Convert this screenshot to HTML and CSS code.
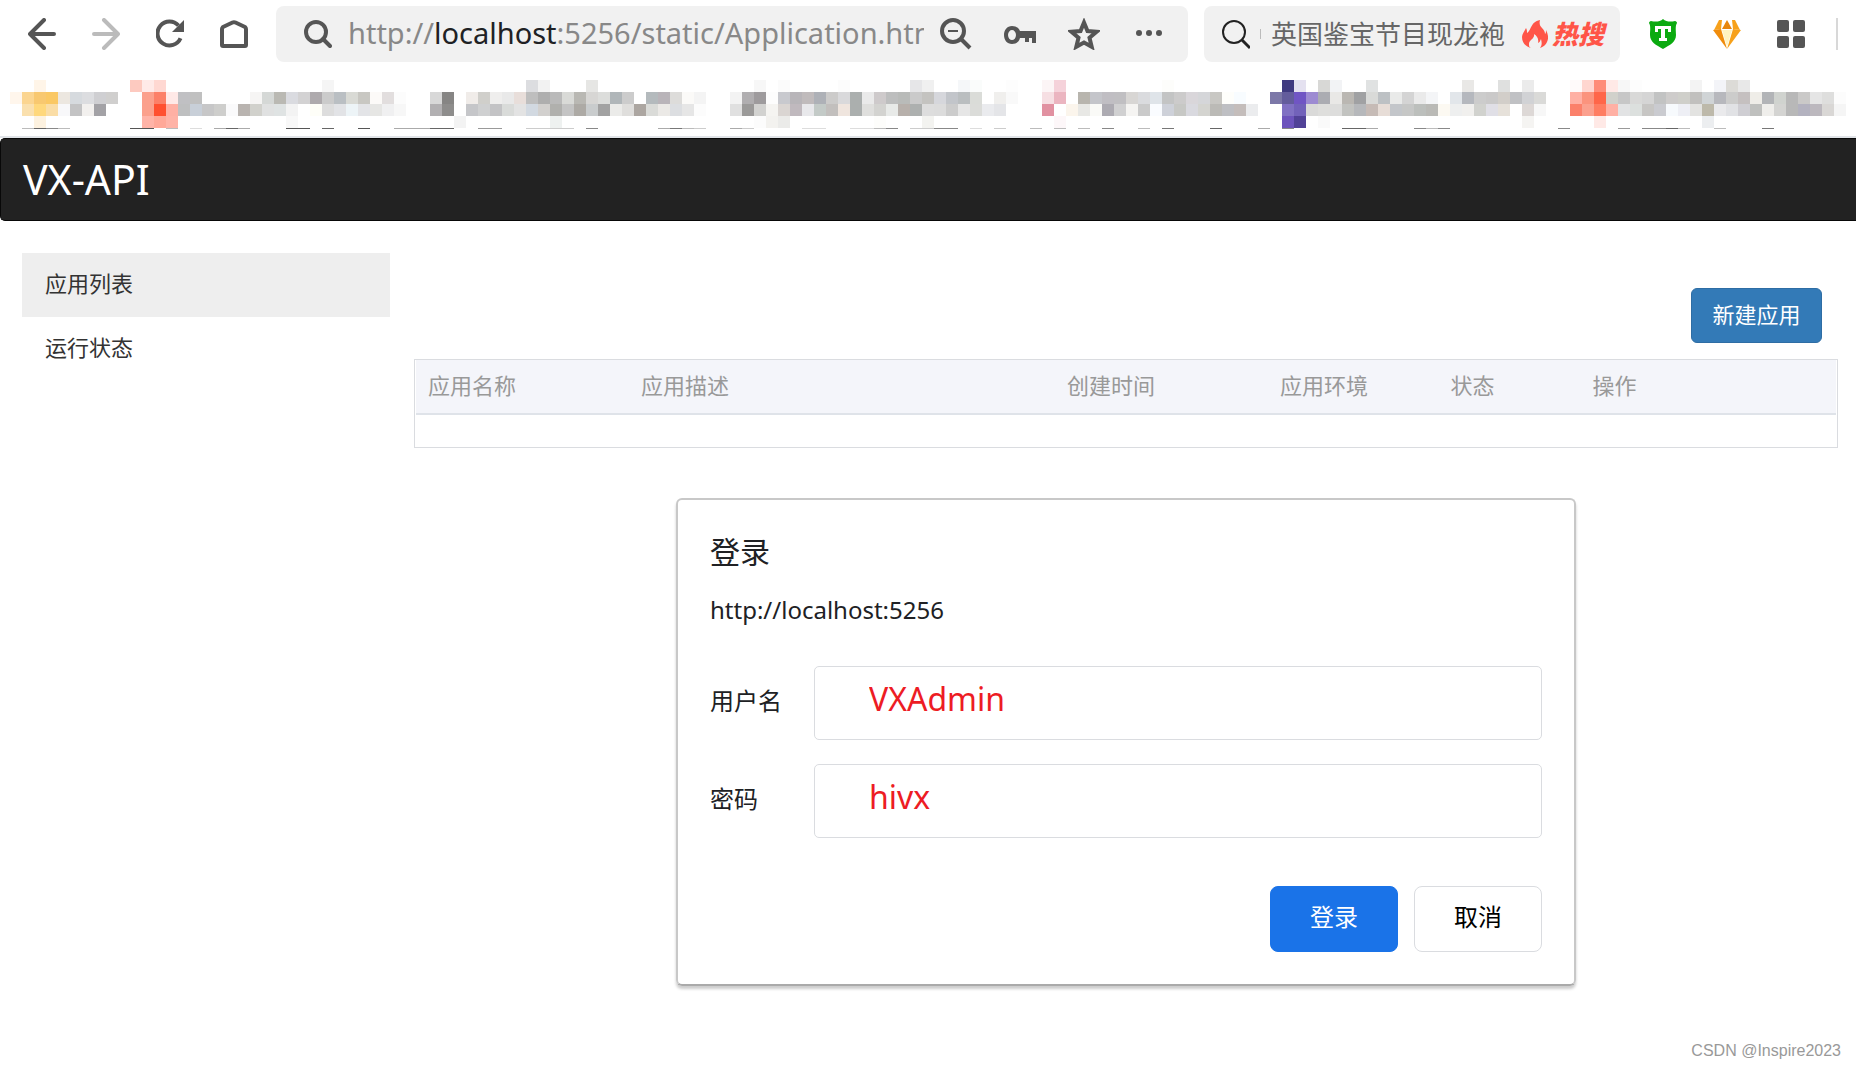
FILE: index.html
```html
<!DOCTYPE html>
<html lang="zh-CN">
<head>
<meta charset="utf-8">
<title>VX-API</title>
<link rel="stylesheet" href="styles.css">
</head>
<body>
<header class="browser">
  <div class="toolbar">
    <div class="nav-buttons">
      <button class="icon-btn" aria-label="后退"><svg viewBox="0 0 28 32" width="28" height="32"><path d="M16 2 2 16l14 14M2 16h24" class="stroke"/></svg></button>
      <button class="icon-btn muted" aria-label="前进"><svg viewBox="0 0 28 32" width="28" height="32"><path d="M12 2l14 14-14 14M26 16H2" class="stroke"/></svg></button>
      <button class="icon-btn" aria-label="刷新"><svg viewBox="0 0 28 32" width="28" height="32"><path d="M24.500 20.300A12 12 0 1 1 22.500 7.500" fill="none" stroke="currentColor" stroke-width="4"/><path d="M28 2v12H16z" fill="currentColor"/></svg></button>
      <button class="icon-btn" aria-label="主页"><svg viewBox="0 0 28 32" width="28" height="32"><path d="M2 11v16q0 1 1 1h22q1 0 1-1V11q0-1-1-2L15.500 4.500q-1.500-.7-3 0L3 9q-1 1-1 2z" class="stroke"/></svg></button>
    </div>
    <div class="address">
      <svg viewBox="0 0 28 32" width="28" height="32"><circle cx="12" cy="14" r="10" class="stroke"/><path d="m19 21 7 7" class="stroke"/></svg>
      <div class="url" role="textbox" aria-label="地址栏" contenteditable="true" spellcheck="false">http://<span class="host">localhost</span>:5256/static/Application.html</div>
      <div class="address-actions">
        <button class="icon-btn" aria-label="缩小"><svg viewBox="0 0 32 32" width="32" height="32"><circle cx="13" cy="13" r="11" fill="none" stroke="currentColor" stroke-width="4"/><path d="M8 13h10" stroke="currentColor" stroke-width="2"/><path d="m21 21 9 9" fill="none" stroke="currentColor" stroke-width="4"/></svg></button>
        <button class="icon-btn" aria-label="密码"><svg viewBox="0 0 32 32" width="32" height="32"><path fill="currentColor" fill-rule="evenodd" d="M8 8c4 0 7 2 8 5h16v12h-4v-5h-3v4h-4v-4h-5c-1 4-4 6-8 6-5 0-8-4-8-9s3-9 8-9zm0 4c-2 0-4 2-4 5s2 5 4 5 4-2 4-5-2-5-4-5z"/></svg></button>
        <button class="icon-btn" aria-label="收藏"><svg viewBox="0 0 32 32" width="32" height="32"><path d="m16 4.500 3.500 8.500 9 .8-7 6 2.200 9L16 24.500l-7.700 4.300 2.200-9-7-6 9-.8z" fill="none" stroke="currentColor" stroke-width="4"/></svg></button>
        <button class="icon-btn" aria-label="更多"><svg viewBox="0 0 32 32" width="32" height="32"><g fill="currentColor"><circle cx="7" cy="15" r="3"/><circle cx="17" cy="15" r="3"/><circle cx="27" cy="15" r="3"/></g></svg></button>
      </div>
    </div>
    <div class="search">
      <svg class="dark" viewBox="0 0 28 32" width="28" height="32"><circle cx="12" cy="14" r="11" fill="none" stroke="currentColor" stroke-width="2"/><path d="m20 22 8 8" stroke="currentColor" stroke-width="3"/></svg>
      <span class="caret"></span>
      <input class="search-input" type="text" aria-label="搜索" value="英国鉴宝节目现龙袍">
      <a class="hot" href="#"><svg viewBox="0 0 26 28" width="26" height="28"><path fill="currentColor" d="M18 0c-1 4 0 6 2 8s3 4 3 6c1-1 1-2 1-4 2 4 3 8 1 12-1 3-4 5-7 6 2-3 2-5 1-9-1 2-1 3-3 4 1-4-1-7-4-9 1 5-5 6-5 10 0 2 0 3 2 4-5-1-9-5-9-11C0 14 2 12 4 8c1 2 1 3 1 5C10 10 8 2 18 0z"/></svg>热搜</a>
    </div>
    <div class="extensions">
      <button class="icon-btn" aria-label="安全"><svg viewBox="0 0 28 30" width="28" height="30"><path d="M14 0c3 3 8 3 12 2 1 0 2 1 2 2-2 3-1 8-1 12 0 7-6 10-13 14C7 26 1 23 1 16 1 12 2 7 0 4c0-1 1-2 2-2 4 1 9 1 12-2z" fill="#0baa10"/><path d="M6 7h16v6h-3v-3h-3v9h2v3h-8v-3h2v-9H9v3H6z" fill="#fff"/></svg></button>
      <button class="icon-btn" aria-label="会员"><svg viewBox="0 0 28 30" width="28" height="30"><path d="M6 1h3L8 10 1 11z" fill="#f7a11a"/><path d="M22 1h-3l1 9 7 1z" fill="#f7a11a"/><path d="m14 1 5 9H9z" fill="#e8860c"/><path d="m0 11 8-1 6 20z" fill="#f08c0c"/><path d="m28 11-8-1-6 20z" fill="#f7a11a"/><path d="M9 11h10l-5 17z" fill="#fff3c0"/></svg></button>
      <button class="icon-btn" aria-label="应用"><svg viewBox="0 0 28 30" width="28" height="30"><g fill="currentColor"><rect y="1" width="12" height="12" rx="2"/><rect x="16" y="1" width="12" height="12" rx="2"/><rect y="17" width="12" height="12" rx="2"/><rect x="16" y="17" width="12" height="12" rx="2"/></g></svg></button>
    </div>
    <span class="divider"></span>
  </div>
  <svg class="bookmarks" id="bookmarks" viewBox="0 0 1836 49" height="49" shape-rendering="crispEdges" aria-hidden="true"></svg>
</header>

<nav class="navbar"><a class="brand" href="#">VX-API</a></nav>

<div class="layout">
  <aside class="sidebar">
    <a class="side-link active" href="#">应用列表</a>
    <a class="side-link" href="#">运行状态</a>
  </aside>
  <main class="content">
    <div class="actions"><button class="btn-new">新建应用</button></div>
    <div class="table-box">
      <table class="apps">
        <colgroup><col class="w15"><col class="w30"><col class="w15"><col class="w12"><col class="w10"><col></colgroup>
        <thead><tr><th>应用名称</th><th>应用描述</th><th>创建时间</th><th>应用环境</th><th>状态</th><th>操作</th></tr></thead>
      </table>
    </div>
    <form class="dialog" role="dialog" aria-labelledby="login-title">
      <h2 class="dialog-title" id="login-title">登录</h2>
      <p class="dialog-site">http://localhost:5256</p>
      <div class="field"><label for="user">用户名</label><input id="user" type="text" value="VXAdmin"></div>
      <div class="field"><label for="pass">密码</label><input id="pass" type="text" value="hivx"></div>
      <div class="dialog-buttons">
        <button class="btn primary" type="button">登录</button>
        <button class="btn" type="button">取消</button>
      </div>
    </form>
  </main>
</div>
<footer class="credit">CSDN @Inspire2023</footer>
<script src="bookmarks.js"></script>
</body>
</html>
```
FILE: styles.css
```css
* { box-sizing: border-box; }

body {
  margin: 0;
  min-height: 100vh;
  display: flex;
  flex-direction: column;
  background: #fff;
  color: #333;
  font-family: "Noto Sans", "Noto Sans CJK SC", sans-serif;
  font-size: 22px;
  line-height: 32px;
}

a { color: inherit; text-decoration: none; }
button, input { font: inherit; color: inherit; }
svg { display: block; flex: none; }
.stroke { fill: none; stroke: currentColor; stroke-width: 4; stroke-linecap: round; stroke-linejoin: round; }

/* browser chrome */
.browser { border-bottom: 2px solid #e1e4e8; padding-bottom: 7px; color: #555; }
.toolbar { display: flex; align-items: center; height: 68px; padding: 0 18px 0 28px; }
.icon-btn { display: block; flex: none; padding: 0; border: 0; background: none; }
.muted { color: #bbb; }
.nav-buttons { display: flex; gap: 36px; margin-right: 28px; }

.address, .search {
  display: flex;
  align-items: center;
  height: 56px;
  border-radius: 8px;
  background: #f1f1f1;
}
.address { flex: 1; min-width: 0; gap: 16px; padding: 0 24px 0 28px; margin-right: 16px; }
.url {
  flex: 1;
  min-width: 0;
  overflow: hidden;
  white-space: nowrap;
  padding-bottom: 2px;
  color: #888;
  font-size: 29px;
  line-height: 40px;
}
.host { color: #202124; }
.address-actions { display: flex; gap: 32px; }

.search { flex: none; width: 416px; padding: 0 16px 0 18px; }
.dark { color: #222; }
.caret { width: 1px; height: 10px; margin: 0 10px; background: #bbb; }
.search-input {
  flex: 1;
  min-width: 0;
  padding: 0;
  border: 0;
  background: none;
  color: #666;
  font-size: 26px;
}
.hot {
  display: flex;
  align-items: center;
  gap: 4px;
  color: #ff5548;
  font-size: 26px;
  font-weight: 900;
  font-style: italic;
}
.extensions { display: flex; gap: 36px; margin: 0 31px 0 29px; }
.divider { width: 2px; height: 32px; background: #d8d8d8; }
.bookmarks { width: calc(100% - 20px); margin: 12px 10px 0; }

/* application */
.navbar {
  height: 83px;
  padding: 0 22px;
  border: 1px solid #080808;
  border-right: 0;
  border-radius: 5px 0 0 5px;
  background: #222;
  color: #fff;
  font-size: 41px;
  line-height: 80px;
}
.layout { display: flex; gap: 24px; padding: 32px 18px 0 22px; }
.sidebar { flex: none; width: 368px; }
.side-link { display: block; padding: 14px 23px 18px; }
.active { background: #eee; }
.content { flex: 1; min-width: 0; }

.actions { display: flex; justify-content: flex-end; padding: 35px 16px 16px; }
.btn-new {
  width: 131px;
  height: 55px;
  padding: 0 0 4px;
  border: 1px solid #2e6da4;
  border-radius: 6px;
  background: #337ab7;
  color: #fff;
}
.table-box { min-height: 89px; padding: 0 1px; border: 1px solid #dadce0; }
.apps { width: 100%; table-layout: fixed; border-collapse: collapse; color: #999; }
.apps th {
  height: 54px;
  padding: 0 12px 4px;
  border-bottom: 2px solid #dfe3e9;
  background: #f4f5fa;
  font-weight: 400;
  text-align: left;
}
.w10 { width: 10%; }
.w12 { width: 12%; }
.w15 { width: 15%; }
.w30 { width: 30%; }

/* login dialog */
.dialog {
  max-width: 900px;
  margin: 50px auto 0;
  padding: 30px 32px 32px;
  border: 2px solid #c8c8c8;
  border-bottom-color: #aaa;
  border-radius: 6px;
  box-shadow: 0 3px 3px rgba(0, 0, 0, .2);
  color: #202124;
  font-size: 24px;
}
.dialog-title { margin: 0 0 18px; font-size: 30px; font-weight: 400; line-height: 44px; }
.dialog-site { margin: 0 0 38px; line-height: 36px; }
.field { display: flex; align-items: center; margin-bottom: 24px; }
.field label { flex: none; width: 104px; padding-bottom: 4px; }
.field input {
  flex: 1;
  min-width: 0;
  height: 74px;
  padding: 0 54px 10px;
  border: 1px solid #dadce0;
  border-radius: 5px;
  background: none;
  color: #ed1c24;
  font-size: 32px;
}
.dialog-buttons { display: flex; justify-content: flex-end; gap: 16px; margin-top: 48px; }
.btn {
  width: 128px;
  height: 66px;
  padding: 0 0 4px;
  border: 1px solid #dadce0;
  border-radius: 8px;
  background: #fff;
  color: #000;
}
.primary { border-color: #1a73e8; background: #1a73e8; color: #fff; }

.credit {
  margin-top: auto;
  padding: 0 15px 2px;
  color: #999;
  font-family: "Liberation Sans", sans-serif;
  font-size: 16px;
  text-align: right;
}
```
FILE: bookmarks.js
```js
// Pixelated bookmark bar: each row is a list of runs, "first column:colours".
const CELL = 12;
const rows = [
  '2:fff5e8 10:fdcac0,ffeae8,ffd8d2 26:f5f5f5 43:dcdde0,f2f2f2 48:e6e6e4 62:f7f7f7 64:fbfbfb 69:fcfcfc 75:e6e6e8,f0f0f0 79:f5f7f9,fafcfb 83:fdfdfd 86:fcf5f6,f5d2da 96:fdfdfb 106:3f3a80,e4e1f0 109:d8d8d6,f2f3f5 113:e0e2e2 121:e9e8e6 124:dfe0df 126:ebebeb 130:fffafa,ffd6d0,ff8c78,ffe9e6,f7f7f7,fdfdfd 140:f3f3f3 142:f3f4f8,dcdbd7,e8e8e8',
  '0:fff6ec,fbd590,f8c870,fac864,ece7e0,d6dade,dcdde0,cfcfd2,d0cfce 11:fba08c,fc8068,ffe9e7,c0c0c3,c0c0c0 20:f6f5f4,d5d8d6,bab9b3,dadbe0,d3d2d3,aeaaad,cbcbcb,babfc3,d9dad5,c8c7c2,fcfaf8,e2dede,fcfcfc 35:d8d8d8,868584 38:f0ece9,d0cfcb,efeeed,e9e9e9,e8deda,bebebe,aeaeae,bababa,d9dad7,b9b8b3,d7d6d4,dcdddb,b0b6b9,cccccc,ffffff,b4babd,b9b4b9,dddcda,fbfaf8,f4f4f4 60:f3f3f3,b0aeb0,9e9b9d,fdfdfd,c8c9ce,b8b5b9,c0bbbc,aeb1b7,cccbca,d9d9db,abafae,eaeaea,cecacb,bdbebe,b9bbb9,cacaca,c4c3c0,d6d7dc,c2c5ca,babec0,dadcd8 82:f0efed,f9f9f9 86:f6dfe3,ebb5c0 89:b8b5ae,c4c5ca,c0bec3,c0bfc2,d8d6d4,dadbde,dfe4e9,c3c4c4,cccbcb,d9d6da,d5d6d9,c8c7c3,fefefb,f8fcff 105:7c78a8,635c9c,7055c4,9d8bd2,abacb2,e9e8e6,bab7b2,a0a1a3,d9dad8,bdc1c4,e9eae9,d4d4d4,eaeaea,f4f5f7 120:e2e6ea,b5b8be,cccccc,cac9c9,d2cec9,c0c1c4,d1d2d5,dadad8 130:ffb0a4,fb937d,ff6649,d1d1cb,c7c7c7,d9d9d8,d5d5d5,c2c3c3,cecccb,cfcfca,c1c0be,d0d4d6,b7b8bd,cccccb,c5c0c0,efede8,b2b4b7,d0d3cf,b8b8b8,cac9c8,e5e5e5,dededd,fcfcfc',
  '1:fae0ae,ffd87c,fadda6,f8f8fa,c3c3c4,f2f0ee,a3a2a6 11:fba08c,ff5030,ffb0a4,bebfc0,c8cfd8,c7c7c8,cececc,fafafb,b9b4b0,d1d1cc,e0e1e1,dfe3e3,f3f3f3 25:fefef8,dddddd,e2e3e6,edf4f7,e3e4e7,e6e6e4,f0f0f1,f7f7f7 35:b2b0b2,8e8d8c 38:c5c6c9,cfd0d1,c3c3c5,d9dbd9,e3e3e3,d2d9e1,d2d0ce,b0b0ad,c4c4c4,adaaa5,c9cccd,a2a2a2,ebebe9,dfdedc,aca6a1,dadbd8,ebe9e6,dcdee1,e6e6e6,fcfcfc 60:e0e0e0,9b9a99,d2d2d0,f5f4f1,dad5d2,c0b9be,e8e8eb,c3cac7,c2bfbd,efe5de,abafae,dfdfdd,d3d3d0,e8eae8,b7b0ab,adb0af,dddddd,dcdcdc,cccccc,e6e6e6,dbdcd9,eaebee,e4e5e8 86:e191a1,ffffff,fbf5ec,e8e8e5,fafaf7,adabb2,d0d0d1,f5f4f2,cacaca,fafcff,ced1d9,c7c8c5,d9d9df,d4d4d0,bbbab6,bebfc3,c4bdbb,ebecee 106:8071c3,7262ba,dadad9,dededc,dddddc,c2c3c0,b6b8bb,c6bbb6,e7ddd7,c3c6ca,c6c7c6,bcbfbc,babab6,fcf9f2,eeefef,f1f0ee,d1d2ce,e0dfe6,e6e1da 126:ddd8d6,f7f7f7 130:fb806a,fba08e,ff7d62,ffb0a4,e2e3e4,dce0de,c7c6c4,cacbd0,f7fafd,eeeff5,e3e3e1,bdb9aa,eaeaec,e1e2e5,cfced3,bfc0be,efeeeb,d4d4d2,b8b8b8,b3b2bf,bcb8be,d9d7d5,f5f5f5',
  '2:fdf2e0 11:ffb3a7,ffa898,ffb3a7 23:f8f8f8 37:f3f3f3 45:eef1f0 62:fcfcfc,f3f2ef,ebebe9 72:fdfdfb 76:f3f3f0 87:fdf7f9 106:6d54bc,514297 109:fafafa 126:f5f4f2 132:ffe9e6 141:eceef0',
  '1:bbb,666,888,bbb 10:555,555 13:bbb 15:ddd 17:aaa,666,aaa 23:555,555 26:666 29:555 32:aaa,aaa,aaa,666,666 39:999,999 43:ccc,ccc,ccc,ccc 48:888 54:aaa,777,bbb,ccc 60:aaa,ccc 66:ddd,ddd 70:ddd,ddd,bbb,888 75:ccc,ccc,888,888 80:ddd 82:ccc 85:bbb 87:bbb 89:bbb 91:888 94:bbb 96:777 100:666 104:aaa 106:888 111:666,666,aaa 117:888,bbb,888 129:888 134:999 136:888,888,666,bbb 142:bbb 146:777'
];
const svg = document.getElementById('bookmarks');
rows.forEach((row, r) => {
  row.split(' ').forEach(run => {
    const [start, colours] = run.split(':');
    colours.split(',').forEach((colour, i) => {
      const rect = document.createElementNS('http://www.w3.org/2000/svg', 'rect');
      rect.setAttribute('x', (Number(start) + i) * CELL);
      rect.setAttribute('y', r * CELL);
      rect.setAttribute('width', CELL);
      rect.setAttribute('height', CELL);
      rect.setAttribute('fill', '#' + colour);
      svg.appendChild(rect);
    });
  });
});
```
